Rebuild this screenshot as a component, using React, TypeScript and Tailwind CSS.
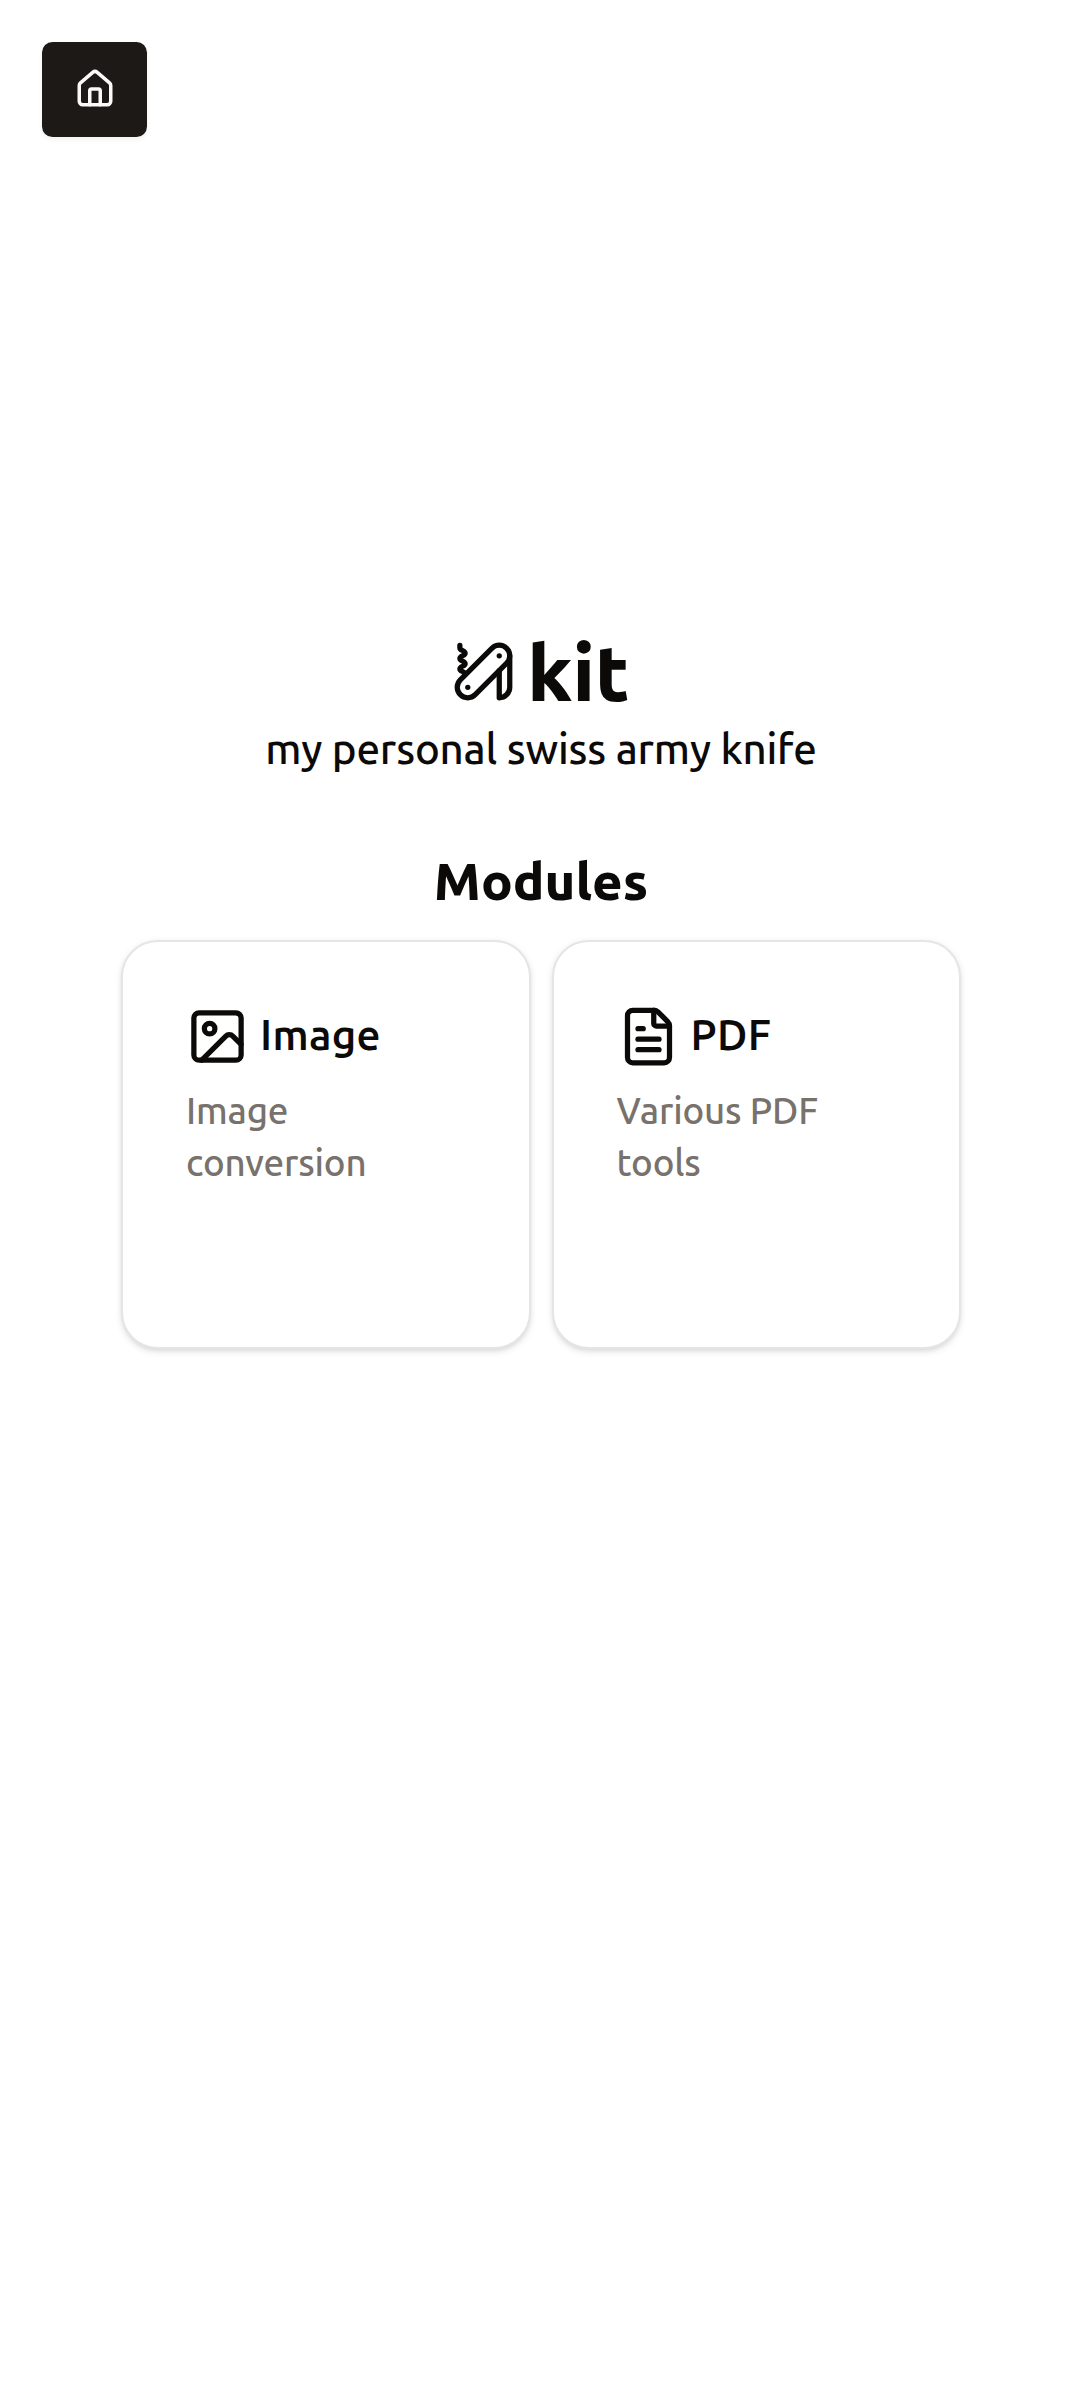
import type { ReactNode } from 'react';
import { FileText, House, Image as ImageIcon, PocketKnife } from 'lucide-react';

function ModuleCard({ icon, title, description }: { icon: ReactNode; title: string; description: string }) {
  return (
    <a
      href="#"
      className="flex size-[409.5px] flex-col gap-[18px] rounded-[36.75px] border-2 border-[#e7e5e4] bg-white p-[63px] shadow-[0_2.625px_7.875px_0_rgb(0_0_0/0.1),0_2.625px_5.25px_-2.625px_rgb(0_0_0/0.1)]"
    >
      <div className="flex items-center gap-[11px]">
        {icon}
        <h3 className="text-[42px] leading-[63px] font-semibold tracking-[0.3px]">{title}</h3>
      </div>
      <p className="text-[36.75px] leading-[52.5px] font-medium tracking-[-0.2px] text-[#78716c]">{description}</p>
    </a>
  );
}

export default function App() {
  return (
    <div className="flex min-h-[2402px] flex-col bg-white font-['Ubuntu_Sans','Ubuntu','Noto_Sans',sans-serif] text-[#0c0a09]">
      <header className="p-[42px]">
        <button
          aria-label="Home"
          className="flex h-[94.5px] w-[105px] items-center justify-center rounded-[10.5px] bg-[#1c1917] text-[#fafaf9] shadow-[0_2.625px_5.25px_0_rgb(0_0_0/0.05)]"
        >
          <House size={42} />
        </button>
      </header>
      <main className="flex flex-col items-center pt-[446px]">
        <div className="flex items-center gap-3">
          <PocketKnife size={63} />
          <h1 className="pt-[5px] text-[78px] leading-[89.5px] font-extrabold">kit</h1>
        </div>
        <p className="text-[42px] leading-[63px] font-medium tracking-[-0.2px]">my personal swiss army knife</p>
        <h2 className="mt-16 text-[52.5px] leading-[73.5px] font-extrabold">Modules</h2>
        <div className="mt-5 flex gap-[21px]">
          <ModuleCard icon={<ImageIcon size={63} />} title="Image" description="Image conversion" />
          <ModuleCard icon={<FileText size={63} />} title="PDF" description="Various PDF tools" />
        </div>
      </main>
    </div>
  );
}
